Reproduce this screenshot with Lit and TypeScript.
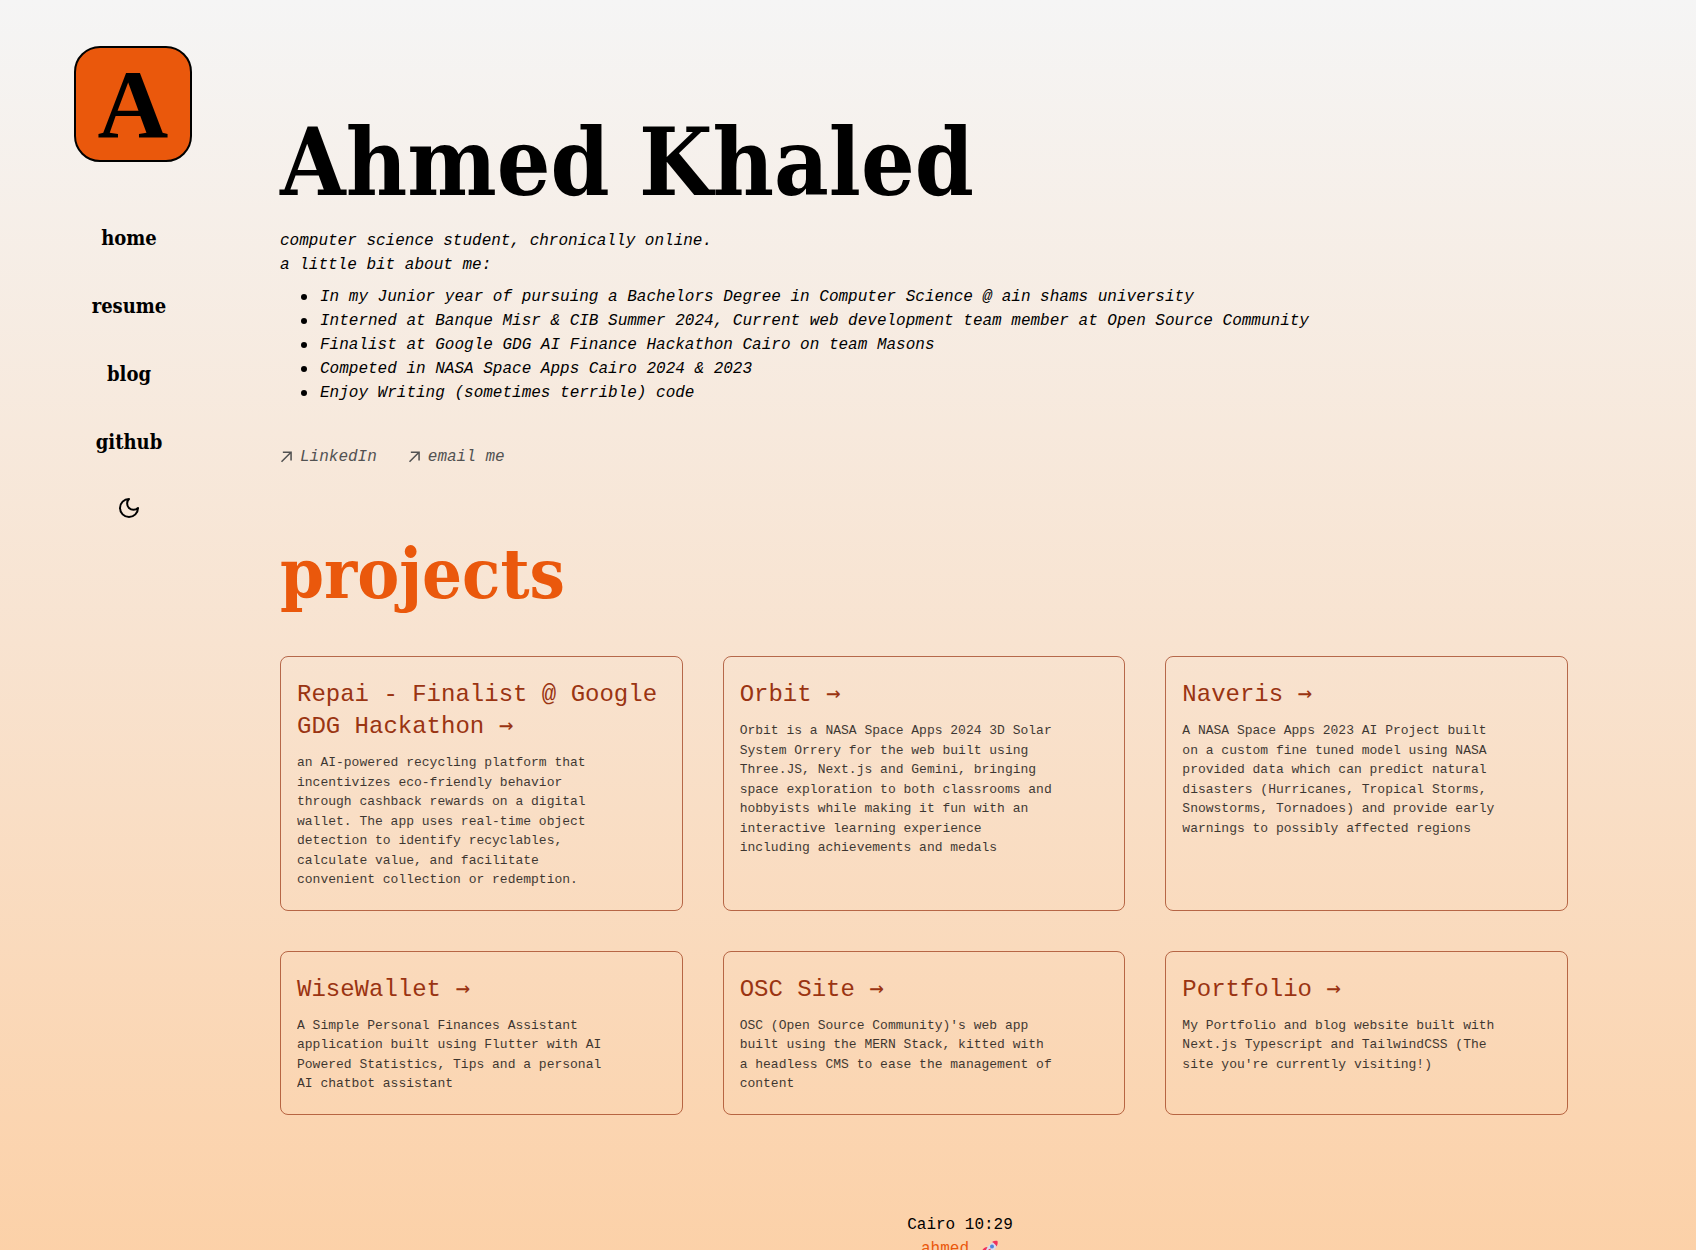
import { LitElement, html, css, svg } from "lit";
import { customElement, property } from "lit/decorators.js";

interface Project {
  name: string;
  text: string;
}

const NAV = ["home", "resume", "blog", "github"];

const FACTS = [
  "In my Junior year of pursuing a Bachelors Degree in Computer Science @ ain shams university",
  "Interned at Banque Misr & CIB Summer 2024, Current web development team member at Open Source Community",
  "Finalist at Google GDG AI Finance Hackathon Cairo on team Masons",
  "Competed in NASA Space Apps Cairo 2024 & 2023",
  "Enjoy Writing (sometimes terrible) code",
];

const CONTACTS = ["LinkedIn", "email me"];

const PROJECTS: Project[] = [
  {
    name: "Repai - Finalist @ Google GDG Hackathon",
    text: "an AI-powered recycling platform that incentivizes eco-friendly behavior through cashback rewards on a digital wallet. The app uses real-time object detection to identify recyclables, calculate value, and facilitate convenient collection or redemption.",
  },
  {
    name: "Orbit",
    text: "Orbit is a NASA Space Apps 2024 3D Solar System Orrery for the web built using Three.JS, Next.js and Gemini, bringing space exploration to both classrooms and hobbyists while making it fun with an interactive learning experience including achievements and medals",
  },
  {
    name: "Naveris",
    text: "A NASA Space Apps 2023 AI Project built on a custom fine tuned model using NASA provided data which can predict natural disasters (Hurricanes, Tropical Storms, Snowstorms, Tornadoes) and provide early warnings to possibly affected regions",
  },
  {
    name: "WiseWallet",
    text: "A Simple Personal Finances Assistant application built using Flutter with AI Powered Statistics, Tips and a personal AI chatbot assistant",
  },
  {
    name: "OSC Site",
    text: "OSC (Open Source Community)'s web app built using the MERN Stack, kitted with a headless CMS to ease the management of content",
  },
  {
    name: "Portfolio",
    text: "My Portfolio and blog website built with Next.js Typescript and TailwindCSS (The site you're currently visiting!)",
  },
];

const arrowIcon = svg`<svg class="arrow" width="12" height="12" viewBox="0 0 12 12" fill="currentColor" aria-hidden="true">
  <path d="M2.07102 11.3494L0.963068 10.2415L9.2017 1.98864H2.83807L2.85227 0.454545H11.8438V9.46023H10.2955L10.3097 3.09659L2.07102 11.3494Z"/>
</svg>`;

const moonIcon = svg`<svg width="24" height="24" viewBox="0 0 24 24" fill="none" stroke="currentColor" stroke-width="2" stroke-linecap="round" stroke-linejoin="round" aria-hidden="true">
  <path d="M12 3a6 6 0 0 0 9 9 9 9 0 1 1-9-9Z"/>
</svg>`;

const rocketIcon = svg`<svg class="rocket" width="18" height="18" viewBox="0 0 36 36" role="img" aria-label="rocket">
  <path fill="#d8dcec" d="M32 3c-8 0-14 4-19 11L6 24l6 6 10-7c7-5 11-11 10-20z"/>
  <path fill="#f0325a" d="M33 2c-4-1-8 0-11 2 4 2 7 5 9 9 2-3 3-7 2-11z"/>
  <path fill="#f0325a" d="M13 14c-5 0-9 3-11 8l8-2zM22 23c0 5-3 9-8 11l2-8z"/>
  <path fill="#8f8fb8" d="M6 24l6 6-3 2-5-5z"/>
  <path fill="#f0325a" d="M10 24c3-4 6-6 10-7-2 4-4 7-8 9-2 1-3 0-2-2z"/>
  <circle fill="#4f86d8" cx="22" cy="13" r="4"/>
</svg>`;

@customElement("project-card")
export class ProjectCard extends LitElement {
  @property() name = "";
  @property() text = "";

  static styles = css`
    :host {
      display: flex;
    }
    .card {
      flex: 1;
      box-sizing: border-box;
      border: 1px solid rgba(154, 52, 18, 0.7);
      border-radius: 8px;
      padding: 22px 16px 20px;
      color: inherit;
      text-decoration: none;
    }
    .name {
      margin: 0 0 10px;
      font-size: 24px;
      line-height: 32px;
      font-weight: 400;
      color: #9a3412;
    }
    .go {
      font-family: "DejaVu Sans Mono", monospace;
      line-height: 24px;
    }
    .text {
      margin: 0;
      max-width: 40ch;
      font-size: 13px;
      line-height: 1.5;
      color: #1c1917;
      opacity: 0.85;
    }
  `;

  render() {
    return html`<a class="card" href="#">
      <h3 class="name">${this.name} <span class="go">→</span></h3>
      <p class="text">${this.text}</p>
    </a>`;
  }
}

@customElement("app-root")
export class AppRoot extends LitElement {
  static styles = css`
    :host {
      display: flex;
      min-height: 100vh;
      box-sizing: border-box;
      background: linear-gradient(to bottom, #f5f5f5, #f8e3d0 50%, #fcd0a6);
      color: #000;
      font-family: "Liberation Mono", monospace;
      font-size: 16px;
      line-height: 24px;
    }
    .side {
      flex: 0 0 224px;
      box-sizing: border-box;
      padding: 46px 32px 0 74px;
    }
    .logo {
      display: flex;
      align-items: center;
      justify-content: center;
      box-sizing: border-box;
      height: 116px;
      border: 2px solid #000;
      border-radius: 26px;
      background: #ea580c;
      color: #000;
      font-family: "Liberation Serif", serif;
      font-weight: 700;
      font-size: 98px;
      line-height: 112px;
      text-decoration: none;
    }
    .nav {
      display: flex;
      flex-direction: column;
      align-items: center;
      gap: 40px;
      margin: 62px 8px 0 0;
    }
    .nav-link {
      font-family: "DejaVu Serif Condensed", "DejaVu Serif", serif;
      font-weight: 700;
      font-size: 20px;
      line-height: 28px;
      color: #000;
      text-decoration: none;
    }
    .theme {
      display: flex;
      padding: 0;
      border: 0;
      background: none;
      color: #000;
    }
    .main {
      flex: 1;
      min-width: 0;
      padding-top: 114px;
    }
    .content {
      padding: 0 128px 0 56px;
    }
    .title,
    .section {
      margin: 0;
      font-family: "DejaVu Serif Condensed", "DejaVu Serif", serif;
      font-weight: 700;
    }
    .title {
      font-size: 94px;
      line-height: 96px;
      margin-bottom: 19px;
    }
    .intro {
      font-style: italic;
    }
    .lead {
      margin: 0;
    }
    .facts {
      margin: 8px 0 40px;
      padding-left: 21px;
      list-style: none;
    }
    .fact {
      display: flex;
      align-items: center;
      gap: 13px;
    }
    .fact::before {
      content: "";
      flex: none;
      width: 6px;
      height: 6px;
      border-radius: 50%;
      background: currentColor;
    }
    .contacts {
      display: flex;
      gap: 31px;
    }
    .contact {
      display: flex;
      align-items: center;
      gap: 8px;
      color: #525252;
      text-decoration: none;
    }
    .section {
      margin: 69px 0 46px;
      font-size: 70px;
      line-height: 72px;
      color: #ea580c;
    }
    .grid {
      display: grid;
      grid-template-columns: repeat(3, minmax(0, 1fr));
      gap: 40px;
    }
    .footer {
      display: flex;
      flex-direction: column;
      align-items: center;
      padding: 98px 0 24px;
    }
    .author {
      display: flex;
      align-items: center;
      gap: 12px;
      color: #ea580c;
      text-decoration: none;
    }
  `;

  render() {
    return html`
      <aside class="side">
        <a class="logo" href="#">A</a>
        <nav class="nav">
          ${NAV.map((item) => html`<a class="nav-link" href="#">${item}</a>`)}
          <button class="theme" type="button" aria-label="Toggle dark mode">${moonIcon}</button>
        </nav>
      </aside>
      <main class="main">
        <div class="content">
          <h1 class="title">Ahmed Khaled</h1>
          <div class="intro">
            <p class="lead">computer science student, chronically online.<br />a little bit about me:</p>
            <ul class="facts">
              ${FACTS.map((fact) => html`<li class="fact">${fact}</li>`)}
            </ul>
            <div class="contacts">
              ${CONTACTS.map((label) => html`<a class="contact" href="#">${arrowIcon}<span>${label}</span></a>`)}
            </div>
          </div>
          <h2 class="section">projects</h2>
          <div class="grid">
            ${PROJECTS.map((p) => html`<project-card .name=${p.name} .text=${p.text}></project-card>`)}
          </div>
        </div>
        <footer class="footer">
          <span>Cairo 10:29</span>
          <a class="author" href="#"><span>ahmed</span>${rocketIcon}</a>
        </footer>
      </main>
    `;
  }
}
